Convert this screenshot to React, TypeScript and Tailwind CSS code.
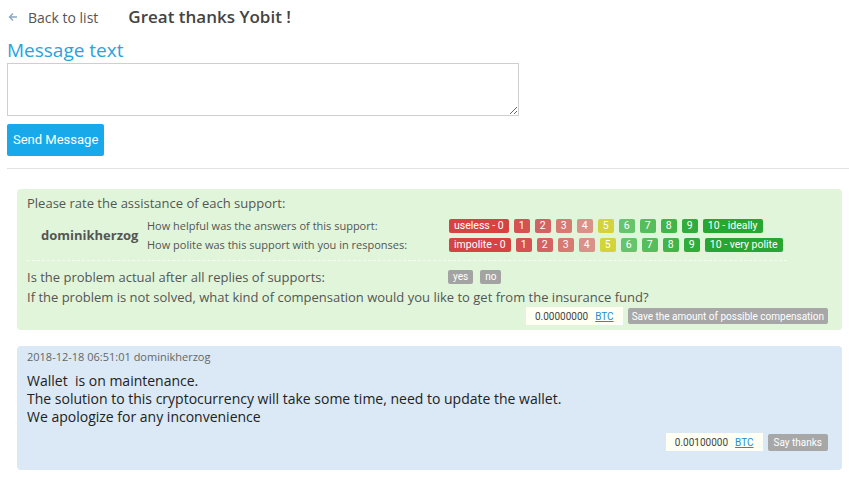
import React from "react";

const helpful = ["useless - 0", "1", "2", "3", "4", "5", "6", "7", "8", "9", "10 - ideally"];
const polite = ["impolite - 0", "1", "2", "3", "4", "5", "6", "7", "8", "9", "10 - very polite"];

// same colour for a given score in both rows
const scoreColors = [
  "bg-[#d64343]",
  "bg-[#d65151]",
  "bg-[#d56262]",
  "bg-[#d67a72]",
  "bg-[#d99189]",
  "bg-[#d3d33a]",
  "bg-[#66c56c]",
  "bg-[#55bd5c]",
  "bg-[#41b44a]",
  "bg-[#2fac3b]",
  "bg-[#27a633]",
];

const RateRow = ({ labels }: { labels: string[] }) => (
  <div className="flex items-center gap-[5px]">
    {labels.map((l, i) => (
      <span
        key={i}
        className={`${scoreColors[i]} text-white rounded-[2px] h-[14px] leading-[14px] px-[5px] min-w-[16px] text-center text-[10.5px] font-['Roboto',sans-serif] cursor-pointer`}
      >
        {l}
      </span>
    ))}
  </div>
);

const AmountBox = ({ value }: { value: string }) => (
  <div className="flex items-center bg-[#fffff3] h-[18px] px-[9px] text-[10px] font-['Roboto',sans-serif] text-[#444]">
    <span>{value}</span>
    <a href="#" className="ml-[7px] text-[#1c8fd0] underline">BTC</a>
  </div>
);

export default function App() {
  return (
    <div className="bg-white min-h-[477px] font-['Open_Sans',sans-serif] text-[#555] px-[7px] overflow-hidden">
      <div className="flex items-center h-[34px]">
        <a href="#" className="flex items-center text-[14px] text-[#555] ml-[1px]">
          <svg className="w-[10px] h-[10px] text-[#8aa8c0]" viewBox="0 0 10 10" fill="none" stroke="currentColor" strokeWidth="1.4">
            <path d="M9 5H1.5M5 1.5L1.5 5 5 8.5" />
          </svg>
          <span className="ml-[10px]">Back to list</span>
        </a>
        <h1 className="ml-[30px] text-[17px] font-semibold text-[#444]">Great thanks Yobit !</h1>
      </div>

      <h2 className="text-[19px] text-[#29a3dc] leading-[24px] mt-[4px]">Message text</h2>
      <textarea className="block w-[512px] h-[53px] border border-[#cfcfcf] mt-[1px] resize-y" />
      <button className="mt-[8px] bg-[#17a9e9] text-white text-[13px] font-['Roboto',sans-serif] h-[32px] px-[6px] rounded-[2px]">
        Send Message
      </button>
      <hr className="mt-[12px] border-t border-[#e3e3e3] -mr-[7px]" />

      <div className="ml-[10px] mt-[20px] bg-[#e0f5da] rounded-[4px] px-[10px] pt-[5px] pb-[5px]">
        <div className="text-[13px] leading-[18px]">Please rate the assistance of each support:</div>
        <div className="flex items-center mt-[4px]">
          <div className="w-[120px] pl-[14px] text-[13px] font-bold text-[#555] pt-[2px]">dominikherzog</div>
          <div className="flex flex-col text-[11px] leading-[19px] w-[302px]">
            <span>How helpful was the answers of this support:</span>
            <span>How polite was this support with you in responses:</span>
          </div>
          <div className="flex flex-col gap-[5px]">
            <RateRow labels={helpful} />
            <RateRow labels={polite} />
          </div>
        </div>
        <div className="border-t border-dashed border-[#f4fbf2] w-[760px] mt-[6px]" />
        <div className="flex items-center mt-[6px] text-[13px] leading-[20px]">
          <span className="w-[421px]">Is the problem actual after all replies of supports:</span>
          <div className="flex gap-[7px] font-['Roboto',sans-serif] text-[10px] text-white">
            <span className="bg-[#a3a3a3] rounded-[2px] h-[14px] leading-[14px] px-[5px]">yes</span>
            <span className="bg-[#a3a3a3] rounded-[2px] h-[14px] leading-[14px] px-[5px]">no</span>
          </div>
        </div>
        <div className="text-[13px] leading-[20px]">If the problem is not solved, what kind of compensation would you like to get from the insurance fund?</div>
        <div className="flex justify-end items-center gap-[5px] pr-[4px]">
          <AmountBox value="0.00000000" />
          <button className="bg-[#a7a7a7] text-white text-[10px] font-['Roboto',sans-serif] h-[16px] px-[4px] rounded-[2px]">
            Save the amount of possible compensation
          </button>
        </div>
      </div>

      <div className="ml-[10px] mt-[16px] bg-[#dae9f5] rounded-[4px] px-[10px] pt-[3px] pb-[19px]">
        <div className="text-[11px] text-[#666] leading-[16px]">2018-12-18 06:51:01 dominikherzog</div>
        <div className="text-[14px] text-[#222] leading-[18px] mt-[7px]">
          <div>Wallet&nbsp; is on maintenance.</div>
          <div>The solution to this cryptocurrency will take some time, need to update the wallet.</div>
          <div>We apologize for any inconvenience</div>
        </div>
        <div className="flex justify-end items-center gap-[5px] pr-[4px] mt-[7px]">
          <AmountBox value="0.00100000" />
          <button className="bg-[#a7a7a7] text-white text-[10px] font-['Roboto',sans-serif] h-[17px] px-[6px] rounded-[2px]">
            Say thanks
          </button>
        </div>
      </div>
    </div>
  );
}
